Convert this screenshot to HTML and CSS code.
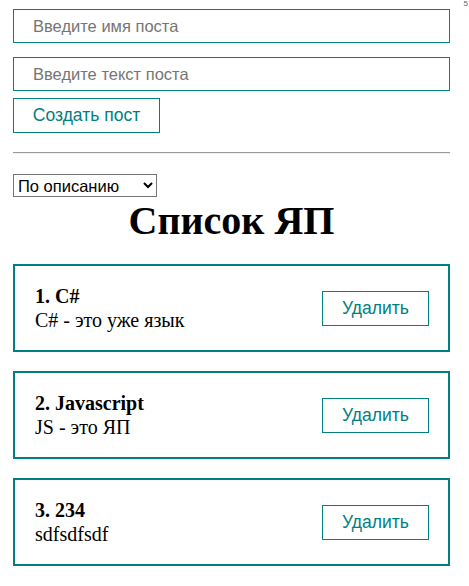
FILE: index.html
```html
<!DOCTYPE html>
<html lang="ru">
<head>
<meta charset="utf-8">
<title>Список ЯП</title>
<link rel="stylesheet" href="styles.css">
</head>
<body>
<span class="corner-mark">5</span>
<div class="app">
  <form class="post-form">
    <input class="field field-first" type="text" placeholder="Введите имя поста">
    <input class="field field-second" type="text" placeholder="Введите текст поста">
    <button class="btn btn-create" type="button">Создать пост</button>
  </form>
  <hr class="divider">
  <select class="sort-select">
    <option>По описанию</option>
    <option>По названию</option>
  </select>
  <h1 class="list-title">Список ЯП</h1>
  <div class="post">
    <div class="post-content">
      <strong class="post-title">1. C#</strong>
      <div class="post-body">C# - это уже язык</div>
    </div>
    <button class="btn btn-delete" type="button">Удалить</button>
  </div>
  <div class="post">
    <div class="post-content">
      <strong class="post-title">2. Javascript</strong>
      <div class="post-body">JS - это ЯП</div>
    </div>
    <button class="btn btn-delete" type="button">Удалить</button>
  </div>
  <div class="post">
    <div class="post-content">
      <strong class="post-title">3. 234</strong>
      <div class="post-body">sdfsdfsdf</div>
    </div>
    <button class="btn btn-delete" type="button">Удалить</button>
  </div>
</div>
</body>
</html>
```

FILE: styles.css
```css
html, body {
  margin: 0;
  padding: 0;
  background: #fff;
}

body {
  font-family: "Liberation Serif", "Times New Roman", serif;
  color: #000;
  overflow: hidden;
}

.corner-mark {
  position: absolute;
  top: 0;
  right: 1px;
  font-family: "Liberation Sans", Arial, sans-serif;
  font-size: 8px;
  line-height: 8px;
  color: #666;
}

.app {
  margin: 0 19px 0 13px;
  padding-top: 9px;
}

.post-form {
  display: flex;
  flex-direction: column;
  align-items: flex-start;
}

.field {
  box-sizing: border-box;
  width: 100%;
  height: 34px;
  margin: 0;
  padding: 0 19px;
  border: 1px solid teal;
  border-radius: 0;
  outline: none;
  font-family: "Liberation Sans", Arial, sans-serif;
  font-size: 16.5px;
  color: #000;
}

.field::placeholder {
  color: #757575;
}

.field-second {
  margin-top: 14px;
}

.btn {
  box-sizing: border-box;
  height: 35px;
  margin: 0;
  padding: 0;
  background: #fff;
  border: 1px solid teal;
  border-radius: 0;
  color: teal;
  font-family: "Liberation Sans", Arial, sans-serif;
  font-size: 17.5px;
  white-space: nowrap;
  text-align: center;
  cursor: pointer;
}

.btn-create {
  margin-top: 7px;
  width: 147px;
}

.divider {
  margin: 19px 0 0;
  height: 0;
  border: 0;
  border-top: 1px solid #9a9a9a;
  border-bottom: 1px solid #eee;
}

.sort-select {
  display: block;
  margin-top: 20px;
  width: 144px;
  height: 23px;
  font-family: "Liberation Sans", Arial, sans-serif;
  font-size: 16.5px;
  color: #000;
  background: #fff;
  border: 1px solid #767676;
  border-radius: 0;
}

.list-title {
  margin: 0;
  text-align: center;
  font-size: 40px;
  font-weight: bold;
}

.post {
  box-sizing: border-box;
  height: 88px;
  margin-top: 20px;
  padding: 0 19px 0 20px;
  border: 2px solid teal;
  display: flex;
  align-items: center;
  justify-content: space-between;
}

.post + .post {
  margin-top: 19px;
}

.post-content {
  display: flex;
  flex-direction: column;
}

.post-title {
  font-size: 20px;
  font-weight: bold;
}

.post-body {
  margin-top: 1px;
  font-size: 20px;
}

.btn-delete {
  width: 107px;
}
```
